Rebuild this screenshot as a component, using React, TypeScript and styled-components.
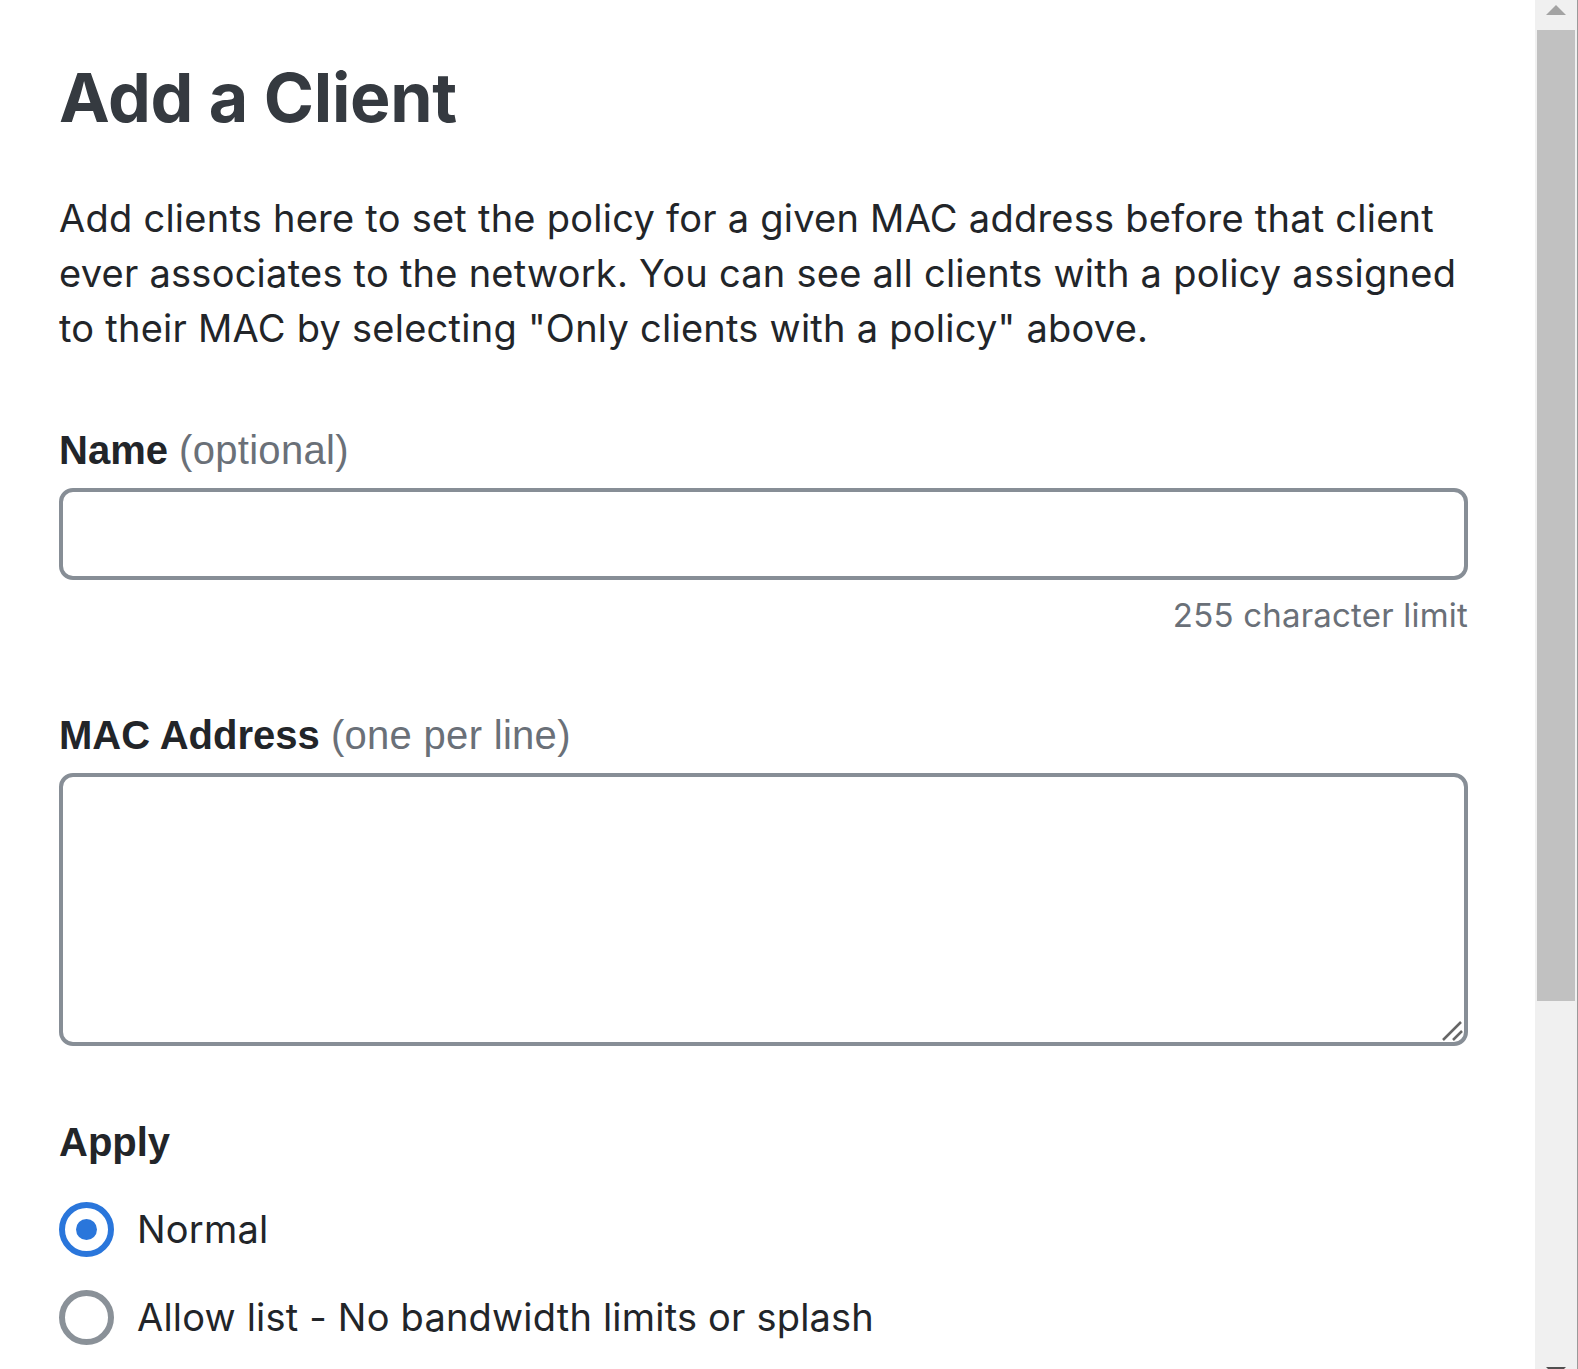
import styled, { createGlobalStyle } from "styled-components";

const GlobalStyle = createGlobalStyle`
  html, body, #root {
    margin: 0;
    padding: 0;
    height: 100%;
    background: #ffffff;
  }
  * {
    box-sizing: border-box;
  }
`;

const Page = styled.div`
  display: flex;
  height: 100vh;
  overflow: hidden;
`;

const Main = styled.main`
  flex: 1;
  padding: 57px 0 0 59px;
  min-width: 0;
`;

const Form = styled.div`
  width: 1409px;
  display: flex;
  flex-direction: column;
`;

const Title = styled.h1`
  margin: 0;
  font-family: Inter, "Noto Sans", sans-serif;
  font-size: 68px;
  line-height: 80px;
  font-weight: 700;
  letter-spacing: -0.3px;
  color: #353a40;
`;

const Intro = styled.p`
  margin: 54px 0 0;
  font-family: Inter, "Noto Sans", sans-serif;
  font-size: 38px;
  line-height: 55px;
  font-weight: 400;
  letter-spacing: 0.25px;
  color: #222529;
`;

const Label = styled.label<{ $gap: number }>`
  display: block;
  margin-top: ${({ $gap }) => $gap}px;
  font-family: "Liberation Sans", Arial, sans-serif;
  font-size: 40px;
  line-height: 46px;
  font-weight: 700;
  color: #222529;
`;

const Hint = styled.span`
  font-weight: 400;
  letter-spacing: 0.3px;
  color: #6a7078;
`;

const Input = styled.input`
  display: block;
  margin-top: 15px;
  width: 100%;
  height: 92px;
  border: 4px solid #878e96;
  border-radius: 14px;
  background: #fff;
  outline: none;
`;

const Counter = styled.div`
  margin-top: 15px;
  text-align: right;
  font-family: Inter, "Noto Sans", sans-serif;
  font-size: 33px;
  line-height: 40px;
  letter-spacing: 0.2px;
  color: #6a7078;
`;

const AreaWrap = styled.div`
  position: relative;
  margin-top: 15px;
`;

const TextArea = styled.textarea`
  display: block;
  width: 100%;
  height: 273px;
  border: 4px solid #878e96;
  border-radius: 14px;
  background: #fff;
  outline: none;
  resize: none;
`;

const Grip = styled.svg`
  position: absolute;
  right: 4px;
  bottom: 4px;
  width: 24px;
  height: 24px;
  pointer-events: none;
`;

const RadioList = styled.div`
  display: flex;
  flex-direction: column;
  gap: 33px;
  margin-top: 37px;
`;

const RadioRow = styled.label`
  display: flex;
  align-items: center;
  gap: 23px;
  height: 55px;
  font-family: Inter, "Noto Sans", sans-serif;
  font-size: 38px;
  line-height: 55px;
  letter-spacing: 0.2px;
  color: #222529;
`;

const RadioCircle = styled.span<{ $checked?: boolean }>`
  flex: none;
  width: 55px;
  height: 55px;
  border-radius: 50%;
  border: 6px solid ${({ $checked }) => ($checked ? "#2a76db" : "#8a9198")};
  display: flex;
  align-items: center;
  justify-content: center;
  &::after {
    content: "";
    width: 21px;
    height: 21px;
    border-radius: 50%;
    background: ${({ $checked }) => ($checked ? "#2a76db" : "transparent")};
  }
`;

const Scrollbar = styled.div`
  flex: none;
  width: 43px;
  background: #f0f0f0;
  border-right: 1px solid #9a9a9a;
  display: flex;
  flex-direction: column;
  align-items: center;
`;

const ArrowButton = styled.div<{ $height: number }>`
  height: ${({ $height }) => $height}px;
  width: 100%;
  display: flex;
  justify-content: center;
  overflow: hidden;
`;

const Arrow = styled.span<{ $down?: boolean }>`
  width: 0;
  height: 0;
  margin-top: ${({ $down }) => ($down ? 0 : 5)}px;
  border-left: 10px solid transparent;
  border-right: 10px solid transparent;
  ${({ $down }) =>
    $down ? "border-top: 10px solid #505050;" : "border-bottom: 10px solid #a3a3a3;"}
`;

const Thumb = styled.div`
  width: 38px;
  height: 971px;
  background: #c1c1c1;
  margin-right: 1px;
`;

const Spacer = styled.div`
  flex: 1;
`;

export default function App() {
  return (
    <Page>
      <GlobalStyle />
      <Main>
        <Form>
          <Title>Add a Client</Title>
          <Intro>
            Add clients here to set the policy for a given MAC address before that client ever
            associates to the network. You can see all clients with a policy assigned to their MAC
            by selecting "Only clients with a policy" above.
          </Intro>

          <Label $gap={71}>
            Name <Hint>(optional)</Hint>
          </Label>
          <Input type="text" />
          <Counter>255 character limit</Counter>

          <Label $gap={77}>
            MAC Address <Hint>(one per line)</Hint>
          </Label>
          <AreaWrap>
            <TextArea />
            <Grip viewBox="0 0 24 24">
              <path d="M3 22 L21 4 M13 22 L22 13" stroke="#666" strokeWidth="2.5" fill="none" />
            </Grip>
          </AreaWrap>

          <Label $gap={73}>Apply</Label>
          <RadioList>
            <RadioRow>
              <RadioCircle $checked />
              Normal
            </RadioRow>
            <RadioRow>
              <RadioCircle />
              Allow list - No bandwidth limits or splash
            </RadioRow>
          </RadioList>
        </Form>
      </Main>
      <Scrollbar>
        <ArrowButton $height={30}>
          <Arrow />
        </ArrowButton>
        <Thumb />
        <Spacer />
        <ArrowButton $height={2}>
          <Arrow $down />
        </ArrowButton>
      </Scrollbar>
    </Page>
  );
}
